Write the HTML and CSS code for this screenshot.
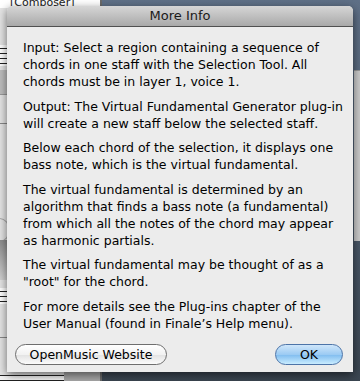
FILE: index.html
```html
<!DOCTYPE html>
<html lang="en">
  <head>
    <meta charset="UTF-8" />
    <title>More Info</title>
    <link rel="stylesheet" href="styles.css">
  </head>
  <body>
    <div class="desktop">
      <div class="score">
        <div class="score-title">[Composer]</div>
        <div class="staff staff-top"></div>
        <div class="band"></div>
        <div class="rule rule-a"></div>
        <div class="knob"></div>
        <div class="shade"></div>
        <div class="staff staff-low"></div>
        <div class="rule rule-b"></div>
        <div class="foot">
          <div class="foot-lines"></div>
          <div class="foot-grey"></div>
        </div>
      </div>
      <div class="back">
        <div class="side-window"></div>
      </div>
    </div>

    <!-- sheet over the score window -->
    <div class="dialog">
      <div class="titlebar">More Info</div>
      <div class="content">
        <p>Input: Select a region containing a sequence of<br>chords in one staff with the Selection Tool. All<br>chords must be in layer 1, voice 1.</p>
        <p>Output: The Virtual Fundamental Generator plug-in<br>will create a new staff below the selected staff.</p>
        <p>Below each chord of the selection, it displays one<br>bass note, which is the virtual fundamental.</p>
        <p>The virtual fundamental is determined by an<br>algorithm that finds a bass note (a fundamental)<br>from which all the notes of the chord may appear<br>as harmonic partials.</p>
        <p>The virtual fundamental may be thought of as a<br>"root" for the chord.</p>
        <p class="more">For more details see the Plug-ins chapter of the<br>User Manual (found in Finale’s Help menu).</p>
      </div>
      <div class="buttons">
        <button class="btn site">OpenMusic Website</button>
        <button class="btn ok">OK</button>
      </div>
    </div>
  </body>
</html>
```

FILE: styles.css
```css
body {
  margin: 0;
  width: 360px;
  height: 381px;
  overflow: hidden;
  position: relative;
  font-family: "Lucida Grande", "DejaVu Sans", sans-serif;
}

.desktop {
  display: flex;
  height: 381px;
}

/* score window behind the sheet */
.score {
  width: 100px;
  position: relative;
  background: #e4e4e4;
  border-right: 2px solid #6a6a6a;
}

.score-title {
  height: 8px;
  background: #fff;
  font-size: 11px;
  line-height: 6px;
  padding-left: 10px;
  overflow: hidden;
  color: #222;
}

.staff {
  position: absolute;
  left: 0;
  right: 0;
  height: 21px;
  background: repeating-linear-gradient(#fff 0 3px, #222 3px 4px, #fff 4px 5px);
}

.staff-top {
  top: 45px;
}

.staff-low {
  top: 288px;
  height: 16px;
}

.band {
  position: absolute;
  top: 70px;
  left: 0;
  right: 0;
  height: 24px;
  background: #bdbdbd;
  border-bottom: 1px solid #999;
}

.rule {
  position: absolute;
  left: 0;
  right: 0;
  height: 1px;
  background: #888;
}

.rule-a {
  top: 123px;
}

.rule-b {
  top: 337px;
}

.knob {
  position: absolute;
  top: 218px;
  left: -12px;
  width: 20px;
  height: 22px;
  border: 1px solid #aaa;
  border-radius: 50%;
}

.shade {
  position: absolute;
  top: 240px;
  left: 0;
  right: 0;
  height: 40px;
  background: linear-gradient(#8c8c8c, #d0d0d0);
}

.foot {
  position: absolute;
  left: 0;
  right: 0;
  bottom: 0;
  height: 9px;
  display: flex;
}

.foot-lines {
  width: 64px;
  background: #f4f4f4;
  border-top: 1px solid #222;
  border-bottom: 1px solid #222;
  margin-top: 3px;
}

.foot-grey {
  flex: 1;
  background: #a9a9a9;
}

.back {
  flex: 1;
  position: relative;
  background: linear-gradient(#5f7087, #4d5c6e 50%, #3b4651);
}

.side-window {
  position: absolute;
  right: 0;
  top: 70px;
  width: 6px;
  height: 170px;
  background: #c9c9c9;
  border-top: 1px solid #999;
}

/* dialog */
.dialog {
  position: absolute;
  left: 7px;
  top: 6px;
  width: 346px;
  height: 366px;
  background: #ececec;
  border-radius: 5px 5px 0 0;
  box-shadow: 0 3px 10px rgba(0, 0, 0, 0.55);
  display: flex;
  flex-direction: column;
}

.titlebar {
  height: 20px;
  line-height: 20px;
  text-align: center;
  font-size: 13px;
  color: #1a1a1a;
  background: linear-gradient(#d6d6d6, #a9a9a9);
  border-bottom: 1px solid #505050;
  border-radius: 5px 5px 0 0;
}

.content {
  padding: 12px 10px 0 16px;
  font-size: 12.5px;
  line-height: 17px;
  color: #000;
  flex: 1;
}

.content p {
  margin: 0 0 7.5px;
  white-space: nowrap;
}

.buttons {
  display: flex;
  justify-content: space-between;
  padding: 0 10px 7px 8px;
}

.btn {
  height: 21px;
  border-radius: 11px;
  font-family: inherit;
  font-size: 12.5px;
  color: #000;
  padding: 0;
}

.site {
  width: 152px;
  border: 1px solid #6e6e6e;
  background: linear-gradient(#ffffff, #f2f2f2 50%, #e2e2e2 51%, #fbfbfb);
}

.ok {
  width: 68px;
  border: 1px solid #4d74a8;
  background: linear-gradient(#cfe6fa, #9ccbf3 50%, #7fbcef 51%, #c9ecff);
}
```
